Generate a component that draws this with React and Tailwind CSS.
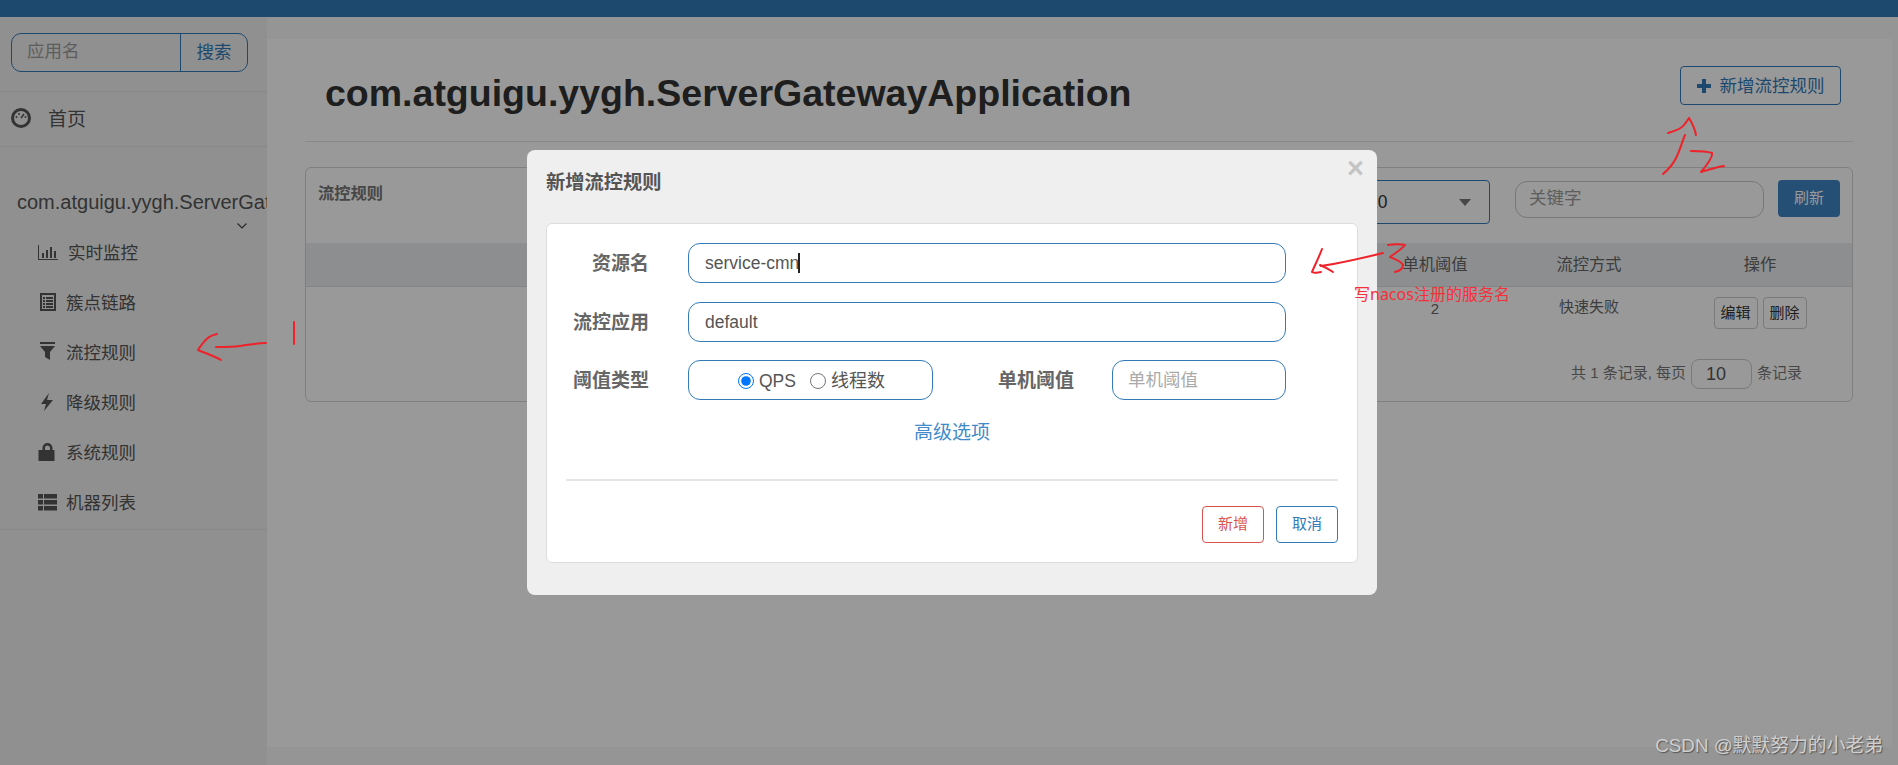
const sans = { fontFamily: '"Liberation Sans", "Noto Sans CJK SC", sans-serif' };

const ChartIcon = () => (
  <svg width="20" height="20" viewBox="0 0 20 20" fill="#555">
    <path d="M0 3h1v14h20v1H0z" />
    <rect x="4" y="11" width="2" height="5" />
    <rect x="8" y="8" width="2" height="8" />
    <rect x="12" y="5" width="2" height="11" />
    <rect x="16" y="9" width="2" height="7" />
  </svg>
);

const ListIcon = () => (
  <svg width="20" height="20" viewBox="0 0 20 20" fill="#555">
    <path fillRule="evenodd" d="M2 1h16v18H2zM4 3v14h12V3z" />
    <rect x="5" y="5" width="2" height="2" />
    <rect x="8" y="5" width="7" height="2" />
    <rect x="5" y="8" width="2" height="2" />
    <rect x="8" y="8" width="7" height="2" />
    <rect x="5" y="11" width="2" height="2" />
    <rect x="8" y="11" width="7" height="2" />
    <rect x="5" y="14" width="2" height="2" />
    <rect x="8" y="14" width="7" height="2" />
  </svg>
);

const FilterIcon = () => (
  <svg width="20" height="20" viewBox="0 0 20 20" fill="#555">
    <rect x="2" y="0" width="15" height="2" />
    <path d="M2 4h15l-5 6v8l-5-3v-5z" />
  </svg>
);

const BoltIcon = () => (
  <svg width="20" height="20" viewBox="0 0 20 20" fill="#555">
    <path d="M11 1 3 12h5l-2 7 9-11H9z" />
  </svg>
);

const LockIcon = () => (
  <svg width="20" height="20" viewBox="0 0 20 20" fill="#555">
    <path fillRule="evenodd" d="M4 8V6a5 5 0 0 1 10 0v2h2v11H0V8zM6.500 8h5V6a2.500 2.500 0 0 0-5 0z" transform="translate(0.5 0)" />
  </svg>
);

const RowsIcon = () => (
  <svg width="20" height="20" viewBox="0 0 20 20" fill="#555">
    <rect x="0" y="2" width="5" height="4.500" />
    <rect x="6" y="2" width="13" height="4.500" />
    <rect x="0" y="8" width="5" height="4.500" />
    <rect x="6" y="8" width="13" height="4.500" />
    <rect x="0" y="14" width="5" height="4.500" />
    <rect x="6" y="14" width="13" height="4.500" />
  </svg>
);

const menu = [
  { name: "实时监控", icon: <ChartIcon />, gap: "ml-[10px]" },
  { name: "簇点链路", icon: <ListIcon />, gap: "ml-[8px]" },
  { name: "流控规则", icon: <FilterIcon />, gap: "ml-[8px]" },
  { name: "降级规则", icon: <BoltIcon />, gap: "ml-[8px]" },
  { name: "系统规则", icon: <LockIcon />, gap: "ml-[8px]" },
  { name: "机器列表", icon: <RowsIcon />, gap: "ml-[8px]" },
];

const Sidebar = () => (
  <aside className="w-[267px] shrink-0 bg-[#f0f0f0] overflow-hidden text-[#555]">
    <div className="h-[75px] pt-[16px] pl-[11px] border-b border-[#e3e3e3]">
      <div className="flex w-[237px] h-[39px] border border-[#337ab7] rounded-[10px] text-[17.5px]">
        <div className="flex-1 pl-[15px] leading-[35px] text-[#9c9c9c]">应用名</div>
        <div className="w-[67px] text-center leading-[37px] text-[#337ab7] border-l border-[#337ab7]">搜索</div>
      </div>
    </div>
    <div className="h-[55px] flex items-center pl-[11px] border-b border-[#e3e3e3]">
      <svg width="20" height="20" viewBox="0 0 20 20" className="-mt-[3px]">
        <circle cx="10" cy="10" r="8.500" fill="none" stroke="#555" strokeWidth="3" />
        <path d="M10 10l3-4" stroke="#555" strokeWidth="1.500" />
        <circle cx="5.500" cy="9" r="1" fill="#555" />
        <circle cx="8" cy="6" r="1" fill="#555" />
        <circle cx="14.500" cy="9" r="1" fill="#555" />
      </svg>
      <span className="ml-[17px] pt-[2px] text-[19px]">首页</span>
    </div>
    <div className="border-b border-[#e3e3e3] pb-[2px]">
      <div className="pt-[43px] pl-[17px] h-[67px] text-[20px] leading-[24px] whitespace-nowrap">
        com.atguigu.yygh.ServerGatewayApplication
      </div>
      <div className="flex justify-end pr-[20px] mt-[9px] h-[6px] -mb-[2px]">
        <svg width="10" height="6" viewBox="0 0 10 6" fill="none" stroke="#444" strokeWidth="1.200">
          <path d="M0.500 0.500 5 5l4.500-4.500" />
        </svg>
      </div>
      {menu.map((item) => (
        <div key={item.name} className="h-[50px] flex items-center pl-[38px] text-[17.5px]">
          {item.icon}
          <span className={`pt-[2px] ${item.gap}`}>{item.name}</span>
        </div>
      ))}
    </div>
  </aside>
);

const RulePanel = () => (
  <div className="mt-[25px] h-[235px] border border-[#d4d4d4] rounded-[6px] flex flex-col">
    <div className="h-[75px] flex items-start pt-[12px] pr-[12px]">
      <h3 className="pl-[12px] pt-[1px] text-[16.25px] font-bold leading-[24px] text-[#777]">流控规则</h3>
      <div className="ml-auto flex items-center w-[140px] h-[44px] border border-[#337ab7] rounded-[4px] pl-[17px] pr-[18px] text-[17.5px] text-[#333]">
        <span>10</span>
        <span className="ml-auto w-0 h-0 border-x-[6px] border-x-transparent border-t-[7px] border-t-[#777]"></span>
      </div>
      <div className="ml-[25px] mt-[1px] w-[249px] h-[37px] border border-[#c8c8c8] rounded-[12px] pl-[13px] text-[17.5px] leading-[33px] text-[#9c9c9c]">关键字</div>
      <button className="ml-[14px] w-[62px] h-[37px] bg-[#3f84c2] rounded-[4px] text-[15px] text-white">刷新</button>
    </div>
    <div className="h-[44px] grid grid-cols-[1fr_150px_158px_184px] items-center bg-[#ebedf0] border-b border-[#dcdcdc] text-center text-[16.25px] text-[#666]">
      <div></div>
      <div>单机阈值</div>
      <div>流控方式</div>
      <div>操作</div>
    </div>
    <div className="h-[72px] grid grid-cols-[1fr_150px_158px_184px] text-center text-[15px] text-[#666]">
      <div></div>
      <div className="pt-[11px]">2</div>
      <div className="pt-[9px]">快速失败</div>
      <div className="pt-[10px] flex justify-center gap-[5px]">
        <button className="w-[44px] h-[32px] border border-[#ccc] rounded-[4px] text-[#333]">编辑</button>
        <button className="w-[44px] h-[32px] border border-[#ccc] rounded-[4px] text-[#333]">删除</button>
      </div>
    </div>
    <div className="flex items-center justify-end pr-[50px] text-[15px] text-[#777]">
      <span className="-mt-[2px]">共 1 条记录, 每页</span>
      <div className="ml-[5px] w-[61px] h-[30px] border border-[#ccc] rounded-[8px] pl-[14px] text-[18px] leading-[28px] text-[#555]">10</div>
      <span className="ml-[5px] -mt-[2px]">条记录</span>
    </div>
  </div>
);

const Main = () => (
  <div className="flex-1 min-w-0 pt-[22px] pr-[6px] pb-[18px] bg-[#f8f8f8]">
    <main className="h-full bg-white pl-[38px] pr-[39px]">
      <div className="h-[103px] flex justify-between border-b border-[#e5e5e5] pl-[20px] pr-[12px]">
        <h1 className="pt-[29px] text-[37.500px] leading-[50px] font-bold text-[#333]">com.atguigu.yygh.ServerGatewayApplication</h1>
        <button className="mt-[27px] w-[161px] h-[39px] flex items-center justify-center border border-[#337ab7] rounded-[4px] text-[17.5px] text-[#337ab7]">
          <svg width="14" height="14" viewBox="0 0 14 14" fill="#337ab7" className="mr-[9px]">
            <path d="M5 0h4v5h5v4H9v5H5V9H0V5h5z" />
          </svg>
          <span className="pt-[2px]">新增流控规则</span>
        </button>
      </div>
      <RulePanel />
    </main>
  </div>
);

const fieldBox = "h-[40px] border border-[#337ab7] rounded-[12px] bg-white text-[17.5px] text-[#555]";
const fieldLabel = "w-[102px] pt-[3px] text-right text-[19px] font-bold text-[#666]";

const RuleDialog = () => (
  <div className="absolute left-[527px] top-[150px] w-[850px] h-[445px] bg-[#efefef] rounded-[8px]">
    <div className="absolute right-[13px] top-[6px] text-[29px] leading-[24px] font-bold text-[#c4c4c4]">×</div>
    <h4 className="pl-[19px] pt-[21px] h-[73px] text-[19.25px] leading-[24px] font-bold text-[#555]">新增流控规则</h4>
    <div className="ml-[19px] w-[812px] h-[340px] bg-white border border-[#ddd] rounded-[6px] pt-[19px]">
      <div className="flex items-center h-[40px]">
        <label className={fieldLabel}>资源名</label>
        <div className={`ml-[39px] w-[598px] flex items-center pl-[16px] ${fieldBox}`}>
          service-cmn
          <span className="w-[2px] h-[20px] -ml-[1px] bg-[#222]"></span>
        </div>
      </div>
      <div className="flex items-center h-[40px] mt-[19px]">
        <label className={fieldLabel}>流控应用</label>
        <div className={`ml-[39px] w-[598px] flex items-center pl-[16px] ${fieldBox}`}>default</div>
      </div>
      <div className="flex items-center h-[40px] mt-[18px]">
        <label className={fieldLabel}>阈值类型</label>
        <div className={`ml-[39px] w-[245px] flex items-center pl-[49px] ${fieldBox}`}>
          <input type="radio" name="grade" defaultChecked className="w-[16px] h-[16px] m-0 mt-[1px] accent-[#0075ff]" />
          <span className="ml-[5px] pt-[3px]">QPS</span>
          <input type="radio" name="grade" className="ml-[14px] w-[16px] h-[16px] m-0 mt-[1px]" />
          <span className="ml-[5px] pt-[3px] text-[18px]">线程数</span>
        </div>
        <label className="ml-[65px] w-[76px] pt-[3px] text-[19px] font-bold text-[#666]">单机阈值</label>
        <div className={`ml-[38px] w-[174px] flex items-center pl-[15px] !text-[#aaa] ${fieldBox}`}>单机阈值</div>
      </div>
      <div className="mt-[21px] text-center text-[19px] leading-[24px] text-[#428bca]">高级选项</div>
      <div className="mt-[34px] ml-[19px] w-[772px] h-[2px] bg-[#e5e5e5]"></div>
      <div className="mt-[25px] mr-[19px] flex justify-end gap-[12px] text-[15px]">
        <button className="w-[62px] h-[37px] border border-[#d9534f] rounded-[4px] text-[#d9534f]">新增</button>
        <button className="w-[62px] h-[37px] border border-[#337ab7] rounded-[4px] text-[#337ab7]">取消</button>
      </div>
    </div>
  </div>
);

// hand drawn marks on top of the screenshot
const Scribbles = () => (
  <svg className="absolute inset-0 pointer-events-none" width="1898" height="765" fill="none" stroke="#ef2129" strokeWidth="2" strokeLinecap="round" strokeLinejoin="round">
    <path d="M216 347C225 347 233 347 240 346C250 345 255 343 266 343" />
    <path d="M217 334C211 335 206 339 203 343C201 346 199 348 198 350C205 353 214 356 221 360" />
    <path d="M294 322V344" />
    <path d="M1668 133C1675 131 1681 129 1684 125C1686 122 1688 120 1689 118C1692 123 1695 129 1696 135" />
    <path d="M1685 135C1682 142 1680 150 1677 156C1674 163 1669 169 1663 174" />
    <path d="M1691 151C1698 151 1706 151 1712 153C1713 158 1706 166 1701 172C1708 170 1716 167 1724 166" />
    <path d="M1322 249C1319 257 1315 265 1312 272C1315 274 1318 272 1321 272" />
    <path d="M1320 265C1325 267 1330 270 1333 272" />
    <path d="M1321 266C1342 263 1363 258 1383 253" />
    <path d="M1388 245C1394 244 1401 244 1405 245C1401 250 1395 253 1390 257C1395 259 1401 261 1403 265C1403 269 1399 271 1395 272" />
  </svg>
);

export default function App() {
  return (
    <div className="relative w-full h-screen overflow-hidden bg-white" style={sans}>
      <div className="h-[17px] bg-[#337ab7]"></div>
      <div className="flex h-[748px]">
        <Sidebar />
        <Main />
      </div>
      <div className="absolute inset-0 bg-black/40"></div>
      <RuleDialog />
      <Scribbles />
      <div className="absolute left-[1354px] top-[283px] font-['Noto_Sans','Noto_Sans_CJK_SC',sans-serif] text-[16px] leading-[22px] text-[#f5303a]">写nacos注册的服务名</div>
      <div className="absolute right-[15px] top-[734px] text-[18.800px] leading-[23px] text-[#cfcfcf] [text-shadow:1px_1px_1px_#555]">CSDN @默默努力的小老弟</div>
    </div>
  );
}
